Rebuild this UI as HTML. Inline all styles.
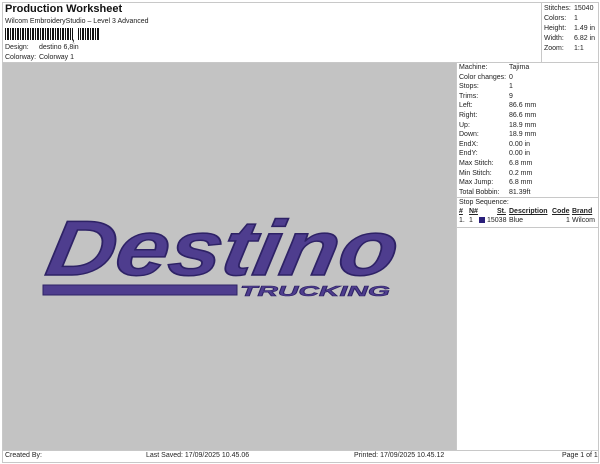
<!DOCTYPE html>
<html><head><style>
body{margin:0;width:600px;height:464px;background:#fff;font-family:"Liberation Sans",sans-serif;font-size:7px;color:#222;position:relative;overflow:hidden}
.a{position:absolute;white-space:nowrap}
.ln{position:absolute;background:#c8c8c8}
</style></head><body>
<div class="a" style="left:2px;top:2px;width:595px;height:459px;border:1px solid #c8c8c8"></div>
<div class="a" style="left:5px;top:3px;font-size:11px;font-weight:bold;color:#111">Production Worksheet</div>
<div class="a" style="left:5px;top:18px">Wilcom EmbroideryStudio – Level 3 Advanced</div>
<div class="a" style="left:5px;top:28px;width:95px;height:12px;background:repeating-linear-gradient(90deg,#111 0 1px,#fff 1px 2px,#111 2px 3px,#111 3px 4px,#fff 4px 5px)"></div>
<div class="a" style="left:73px;top:28px;width:5px;height:12px;background:#fff"></div>
<div class="a" style="left:72px;top:33px;font-size:9px;font-weight:bold">,</div>
<div class="a" style="left:5px;top:44px">Design:</div><div class="a" style="left:39px;top:44px">destino 6,8in</div>
<div class="a" style="left:5px;top:54px">Colorway:</div><div class="a" style="left:39px;top:54px">Colorway 1</div>
<div class="ln" style="left:541px;top:2px;width:1px;height:60px"></div>
<div class="a" style="left:544px;top:4px;line-height:10px">Stitches:<br>Colors:<br>Height:<br>Width:<br>Zoom:</div>
<div class="a" style="left:574px;top:4px;line-height:10px">15040<br>1<br>1.49 in<br>6.82 in<br>1:1</div>
<div class="ln" style="left:2px;top:62px;width:596px;height:1px"></div>
<div class="a" style="left:3px;top:63px;width:453px;height:387px;background:#c3c3c3"></div>
<div class="ln" style="left:456px;top:62px;width:1px;height:389px"></div>
<div class="a" style="left:459px;top:63px;line-height:9.6px">Machine:<br>Color changes:<br>Stops:<br>Trims:<br>Left:<br>Right:<br>Up:<br>Down:<br>EndX:<br>EndY:<br>Max Stitch:<br>Min Stitch:<br>Max Jump:<br>Total Bobbin:</div>
<div class="a" style="left:509px;top:63px;line-height:9.6px">Tajima<br>0<br>1<br>9<br>86.6 mm<br>86.6 mm<br>18.9 mm<br>18.9 mm<br>0.00 in<br>0.00 in<br>6.8 mm<br>0.2 mm<br>6.8 mm<br>81.39ft</div>
<div class="ln" style="left:457px;top:197px;width:141px;height:1px"></div>
<div class="a" style="left:459px;top:199px">Stop Sequence:</div>
<div class="a" style="left:459px;top:208px;font-weight:bold;text-decoration:underline">#</div>
<div class="a" style="left:469px;top:208px;font-weight:bold;text-decoration:underline">N#</div>
<div class="a" style="left:497px;top:208px;font-weight:bold;text-decoration:underline">St.</div>
<div class="a" style="left:509px;top:208px;font-weight:bold;text-decoration:underline">Description</div>
<div class="a" style="left:552px;top:208px;font-weight:bold;text-decoration:underline">Code</div>
<div class="a" style="left:572px;top:208px;font-weight:bold;text-decoration:underline">Brand</div>
<div class="a" style="left:459px;top:217px">1.</div><div class="a" style="left:469px;top:217px">1</div>
<div class="a" style="left:479px;top:217px;width:6px;height:6px;background:#2a1f7a"></div>
<div class="a" style="left:487px;top:217px">15038</div><div class="a" style="left:509px;top:217px">Blue</div>
<div class="a" style="left:566px;top:217px">1</div><div class="a" style="left:572px;top:217px">Wilcom</div>
<div class="ln" style="left:457px;top:227px;width:141px;height:1px"></div>
<div class="ln" style="left:2px;top:450px;width:596px;height:1px"></div>
<div class="a" style="left:5px;top:452px">Created By:</div>
<div class="a" style="left:146px;top:452px">Last Saved: 17/09/2025 10.45.06</div>
<div class="a" style="left:354px;top:452px">Printed: 17/09/2025 10.45.12</div>
<div class="a" style="left:562px;top:452px">Page 1 of 1</div>
<svg class="a" style="left:0;top:0" width="600" height="464">
<text x="44" y="275" font-family="Liberation Sans" font-weight="bold" font-style="italic" font-size="78" textLength="350" lengthAdjust="spacingAndGlyphs" fill="#4e3d8e" stroke="#2e2266" stroke-width="1.5" transform="skewX(-10) translate(48,0)">Destino</text>
<rect x="43" y="285" width="194" height="10" fill="#4e3d8e" stroke="#2e2266"/>
<text x="240" y="296" font-family="Liberation Sans" font-weight="bold" font-style="italic" font-size="15" textLength="150" lengthAdjust="spacingAndGlyphs" fill="#4e3d8e" stroke="#2e2266" stroke-width="0.6">TRUCKING</text>
</svg>
</body></html>
